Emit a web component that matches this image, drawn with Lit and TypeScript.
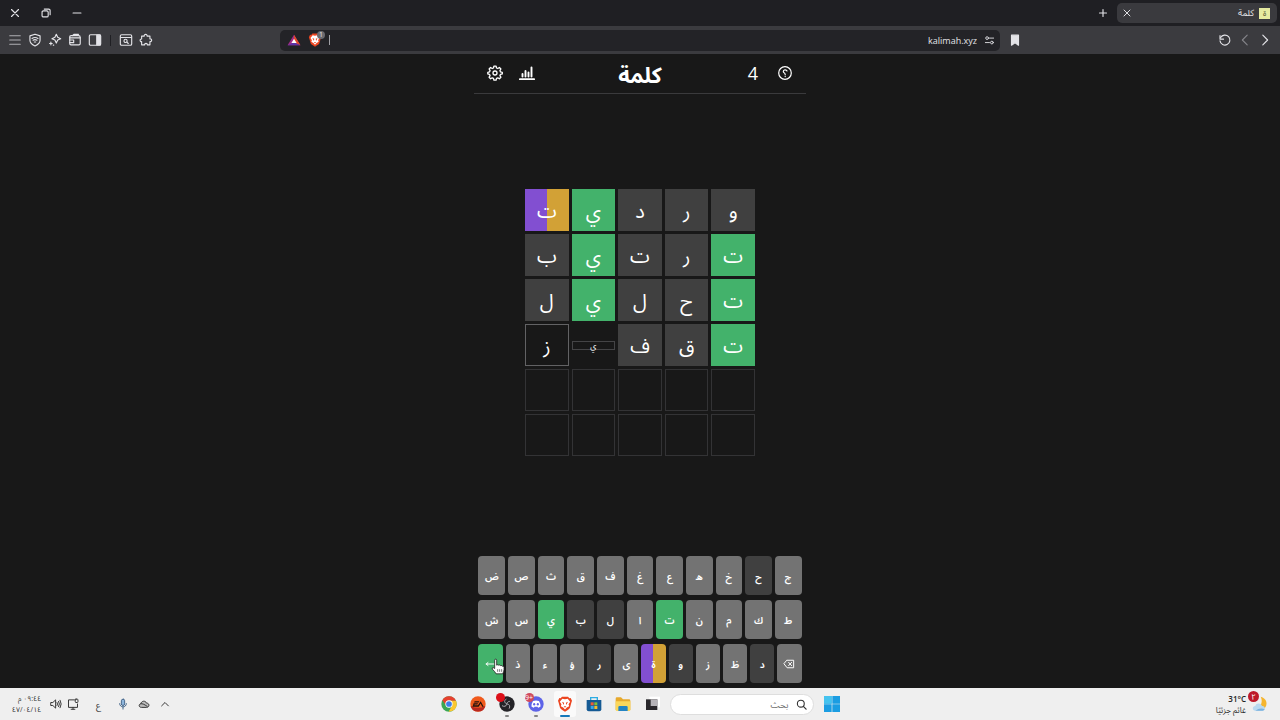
import { LitElement, html, css, svg } from "lit";
import { customElement, property } from "lit/decorators.js";
import { classMap } from "lit/directives/class-map.js";

type Cell = { letter: string; state: string };

/** Line icons, drawn on a 16-unit grid. */
const icons: Record<string, unknown> = {
  close: svg`<path d="M4 4l8 8M12 4l-8 8"/>`,
  restore: svg`<rect x="3.5" y="5.5" width="7" height="7" rx="1.5"/><path d="M6 3.5h5a1.7 1.7 0 0 1 1.7 1.7V10"/>`,
  minimize: svg`<path d="M3.5 8h9"/>`,
  plus: svg`<path d="M8 4v8M4 8h8"/>`,
  menu: svg`<path d="M2 3.2h12M2 8h12M2 12.8h12"/>`,
  shield: svg`<path d="M8 1.5l5.8 1.8v4.9c0 3-2.4 5-5.8 6.6-3.4-1.6-5.800-3.600-5.800-6.600V3.300z"/><path d="M4.600 6.200q3.400-2.200 6.800 0M5.800 8.300q2.200-1.300 4.400 0M7.200 10.300h1.600"/>`,
  sparkle: svg`<path d="M9.500 1.500l1.600 3.400 3.400 1.600-3.400 1.600-1.600 3.400-1.600-3.400-3.400-1.600 3.400-1.600z"/><path d="M3.300 10.500v3M1.800 12h3M6 13.800h.6"/>`,
  wallet: svg`<path d="M2 6V4.500Q2 3 3.500 3H12q2 0 2 2v7q0 1.500-1.500 1.500h-9Q2 13.500 2 12z"/><path d="M5 3l2-1.500h5M2 5.500h12M2 8h4.500v3H2"/>`,
  sidebar: svg`<rect x="1.500" y="2" width="13" height="12" rx="1.500"/><path d="M10 2.500h4v11h-4z" fill="currentColor"/>`,
  pageSearch: svg`<rect x="1.500" y="2" width="13" height="12" rx="1.500"/><path d="M2 5.200h12"/><circle cx="7.500" cy="9" r="1.800"/><path d="M9 10.400l1.600 1.600"/>`,
  puzzle: svg`<path d="M3 3.500h3c-.6-2.600 3.800-2.600 3.200 0h3.300v3.200c2.600-.5 2.600 3.600 0 3.100v3.700H9.500c.3-2.200-3.300-2.200-3 0H3v-3.600c-2.300.3-2.300-3.300 0-3z"/>`,
  tune: svg`<circle cx="4.500" cy="4.500" r="2"/><path d="M8 4.500h6M2 11h6"/><circle cx="11.500" cy="11" r="2"/>`,
  bookmark: svg`<path d="M4 2.500h8v11.500l-4-2.800-4 2.800z" fill="currentColor"/>`,
  reload: svg`<path d="M3 5.200A5.700 5.700 0 1 1 2.300 9"/><path d="M2.300 3v4h4" />`,
  back: svg`<path d="M10.500 2.500L5 8l5.500 5.500"/>`,
  forward: svg`<path d="M5.500 2.500L11 8l-5.500 5.500"/>`,
  gear: svg`<circle cx="8" cy="8" r="2"/><path d="M6.900 1.200h2.200l.4 1.800 1.300.5 1.600-1 1.500 1.500-1 1.600.6 1.300 1.800.4v1.600l-1.800.4-.6 1.400 1 1.500-1.500 1.600-1.600-1-1.300.5-.4 1.800H6.900l-.4-1.800-1.300-.5-1.600 1-1.500-1.600 1-1.500-.6-1.400-1.700-.4V7.300l1.700-.4.600-1.300-1-1.600 1.500-1.500 1.600 1 1.300-.5z"/>`,
  stats: svg`<path d="M.8 14.200h14.400" stroke-width="1.700"/><path d="M3.500 11.500V9M6.500 11.500V6M9.500 11.500V7.500M12.500 11.500V2.500" stroke-width="1.900"/>`,
  help: svg`<circle cx="8" cy="8" r="6.300" stroke-width="1.200"/><path d="M10 6C9.400 4.300 6.300 4.400 6.300 6.400c0 1.500 1.900 1.500 1.900 3.100M8.200 11.200v.4" stroke-width="1.200"/>`,
  backspace: svg`<path d="M5.500 3h8.700v10H5.500L1.500 8z"/><path d="M7.500 5.800l4 4.400M11.500 5.800l-4 4.400"/>`,
  enter: svg`<path d="M1.500 8h13M4 6L1.500 8 4 10"/>`,
  chevronUp: svg`<path d="M3.500 10.500L8 6l4.500 4.500"/>`,
  mic: svg`<rect x="5.800" y="1.500" width="4.400" height="8.500" rx="2.200" fill="#8db5dc"/><path d="M3.500 7.500c0 6 9 6 9 0M8 12v2.800"/>`,
  cloud: svg`<path d="M4.200 12.500C.5 12.500.8 8 3.800 7.700 4.500 3.600 10 3 11.300 6.800c4.200-.2 4.500 5.700.7 5.700z" fill="#bcbcbc"/><path d="M3.800 7.700c2-.4 4 .3 8.500 3.500"/>`,
  display: svg`<path d="M10 2.500H2v10h12V8M5.500 15h5M8 12.500V15"/><rect x="11" y="1.500" width="3.600" height="4.500" rx="1"/>`,
  volume: svg`<path d="M1.500 6h2.300L7.500 2.500v11L3.800 10H1.500z"/><path d="M9.500 6q1.200 2 0 4M11.500 4.500q2.200 3.500 0 7M13.500 3q3 5 0 10"/>`,
  search: svg`<circle cx="7" cy="6.800" r="5" stroke-width="1.600"/><path d="M10.700 10.700l4 4" stroke-width="1.800"/>`,
};

/** Filled, coloured marks, drawn on a 24-unit grid. */
const marks: Record<string, unknown> = {
  windows: svg`<path d="M0 0h11.500v11.500H0zM12.500 0H24v11.500H12.500zM0 12.500h11.500V24H0zM12.500 12.500H24V24H12.500z" fill="#1b9de2"/><path d="M0 0h11.500v11.500H0z" fill="#45c3ef"/>`,
  taskview: svg`<rect x="8" y="1" width="16" height="16" fill="#fff"/><path d="M3 5h17v16H3z" fill="#29272b"/><path d="M10 5h10v10H10z" fill="#b6b3b8"/>`,
  explorer: svg`<path d="M1 4q0-2 2-2h6l3 3h9q2 0 2 2v14H1z" fill="#e7a92c"/><path d="M1 8h22v13q0 1.500-2 1.500H3q-2 0-2-2z" fill="#fbd75b"/><path d="M5 22.500v-6q0-1.500 2-1.500h10q2 0 2 1.500v6z" fill="#2384c4"/>`,
  store: svg`<path d="M7 7V2.500h10V7" fill="none" stroke="#2cace3" stroke-width="2"/><path d="M1 6h22v14q0 3-3 3H4q-3 0-3-3z" fill="#155a94"/><path d="M7 9.500h4.500V14H7z" fill="#ef5b35"/><path d="M12.500 9.500H17V14h-4.500z" fill="#84bd35"/><path d="M7 15h4.500v4.500H7z" fill="#35a8e8"/><path d="M12.500 15H17v4.500h-4.500z" fill="#f6bd2c"/>`,
  brave: svg`<path d="M7.500 1h9l2 2.300 2-.2 2 4-1 3-2 7.500q-.8 2-7.500 5.900-6.700-3.900-7.500-5.900l-2-7.500-1-3 2-4 2 .2z" fill="#ec4520"/><path d="M12 4.800l4-.8 3.800 4.500-2.500 4 1 2.700-3.600 2-2.700 3-2.700-3-3.600-2 1-2.700-2.500-4L8 4z" fill="#fff"/><path d="M7.500 8.500l3.200 1.500-.6 3.500zM16.500 8.500l-3.200 1.500.6 3.500zM10 15.500h4l-2 2z" fill="#ec4520"/>`,
  discord: svg`<circle cx="12" cy="12" r="11.500" fill="#5d63e8"/><path d="M7.500 7.500q4.500-1.500 9 0 2.700 4.500 2.300 8.300-1.800 1.500-3.700 1.700l-.8-1.500q-2.300.6-4.600 0l-.8 1.500q-1.900-.2-3.700-1.700Q4.800 12 7.500 7.500z" fill="#fff"/><ellipse cx="9.300" cy="12.500" rx="1.600" ry="1.900" fill="#5d63e8"/><ellipse cx="14.700" cy="12.500" rx="1.600" ry="1.900" fill="#5d63e8"/>`,
  obs: svg`<circle cx="12" cy="12" r="11.500" fill="#242327"/><path d="M11 4.500c-3.500 2-3.500 6 .8 7 .5-2 2-3.500 4.500-3.500M12 12c-1 3.500-4.500 4.500-7.500 2.500M12 11.800c4 .5 5 4 3.200 7.200" fill="none" stroke="#a9a7ac" stroke-width="1.500"/>`,
  ea: svg`<circle cx="12" cy="12" r="11.500" fill="#f05a1c"/><path d="M.8 14.500a11.500 11.500 0 0 0 22.400 0Q12 21 .8 14.500z" fill="#b92820"/><path d="M7 8h7l-1 1.800H6zM5.500 11h6.500l-1 1.700H7l-.8 1.300H12l4-6 4.500 8h-2.200l-2.300-4.600L13 16H3.500l1.800-3.300H4.500z" fill="#22100d"/>`,
  chrome: svg`<circle cx="12" cy="12" r="11.500" fill="#3aa653"/><path d="M2 6.300A11.500 11.500 0 0 1 22.500 7H12a5 5 0 0 0-4.700 7z" fill="#e6402f"/><path d="M22.500 7A11.500 11.500 0 0 1 11.500 23.500L17 13.500Q17.500 9.500 14 7z" fill="#fcc72f"/><circle cx="12" cy="12" r="5.500" fill="#fff"/><circle cx="12" cy="12" r="4.300" fill="#3d7de8"/>`,
  rewards: svg`<path d="M12 3l11 18H1z" fill="#a02c86"/><path d="M12 3l11 18-11-4z" fill="#e24928"/><path d="M1 21h22l-11-5z" fill="#5d32a8"/><path d="M12 10l4.500 7h-9z" fill="#fff"/>`,
  weather: svg`<path d="M13 1c9 2 12 12 5 18L8 18C15 14 16 7 13 1z" fill="#f5b52e"/><path d="M5 22c-5 0-5-7 0-7 1-5 9-5 10 0 5-1 6 7 1 7z" fill="#b9d9f0"/><path d="M5 22q7-5 14-2-1 2-3 2z" fill="#7bb2df"/>`,
  hand: svg`<path d="M7 2.500q0-1.500 1.500-1.500T10 2.500V10q2-1.500 3 0 2-1 3 .7 2.200-.8 2.700 1 2-.4 2.300 1.500V17q-.4 3-2 6H9q-1.500-3.500-5.500-7-1-2.400 1.200-2.400L7 15z" fill="#fff" stroke="#222" stroke-width="1.200"/><path d="M11.500 16v4M14.500 16v4M17.500 16v4" stroke="#333" stroke-width="1"/>`,
};

@customElement("ui-icon")
export class UiIcon extends LitElement {
  @property() name = "";
  @property({ type: Boolean }) mark = false;

  static styles = css`
    :host {
      display: block;
      width: 14px;
      height: 14px;
    }
    svg {
      display: block;
      width: 100%;
      height: 100%;
      overflow: visible;
    }
    .line {
      fill: none;
      stroke: currentColor;
      stroke-width: 1.300;
      stroke-linecap: round;
      stroke-linejoin: round;
    }
  `;

  render() {
    return this.mark
      ? html`<svg viewBox="0 0 24 24" aria-hidden="true">${marks[this.name]}</svg>`
      : html`<svg class="line" viewBox="0 0 16 16" aria-hidden="true">${icons[this.name]}</svg>`;
  }
}

const reset = css`
  * {
    box-sizing: border-box;
  }
  button,
  input {
    margin: 0;
    padding: 0;
    border: 0;
    background: none;
    color: inherit;
    font: inherit;
    outline: none;
  }
  button {
    display: flex;
    align-items: center;
    justify-content: center;
    cursor: pointer;
  }
`;

@customElement("browser-bar")
export class BrowserBar extends LitElement {
  static styles = [
    reset,
    css`
      :host {
        display: block;
        color: #e4e4e8;
        font-size: 9px;
      }
      .tabs,
      .tools {
        display: flex;
        align-items: center;
        height: 26px;
      }
      .tabs {
        justify-content: space-between;
        padding: 0 3px 0 7px;
        background: #1f1f23;
      }
      .group {
        display: flex;
        align-items: center;
        gap: 7px;
      }
      .tab {
        display: flex;
        align-items: center;
        gap: 5px;
        width: 160px;
        height: 20px;
        padding: 0 7px 0 4px;
        border-radius: 5px;
        background: #3a3a3e;
      }
      .favicon {
        display: grid;
        place-items: center;
        width: 11px;
        height: 11px;
        background: #e5eaa0;
        color: #4b4d2c;
        font-size: 8px;
        line-height: 10px;
      }
      .tab button {
        margin-inline-start: auto;
      }
      .small {
        width: 12px;
        height: 12px;
      }
      .window {
        display: flex;
        gap: 15px;
      }
      .window button {
        width: 16px;
        height: 16px;
      }
      .tools {
        display: grid;
        grid-template-columns: 1fr minmax(0, 720px) 1fr;
        height: 28px;
        padding: 0 8px;
        background: #3b3b3f;
      }
      .nav {
        display: flex;
        align-items: center;
        gap: 6px;
      }
      .off {
        color: #85858a;
      }
      .dim {
        color: #b0b0b4;
      }
      .push {
        margin-inline-start: auto;
        margin-inline-end: 8px;
      }
      .address {
        display: flex;
        align-items: center;
        gap: 7px;
        height: 21px;
        padding: 0 5px 0 7px;
        border-radius: 5px;
        background: #232327;
      }
      .address input {
        flex: 1;
        min-width: 0;
        direction: ltr;
        text-align: right;
        margin-inline-start: 2px;
      }
      .tune {
        width: 11px;
        height: 11px;
      }
      .caret {
        width: 1px;
        height: 10px;
        background: #a0a0a5;
      }
      .lion {
        position: relative;
      }
      .count {
        position: absolute;
        top: -2px;
        right: -3px;
        width: 8px;
        height: 8px;
        border-radius: 4px;
        background: #6b6b70;
        font-size: 7px;
        line-height: 8px;
        text-align: center;
      }
      .extras {
        display: flex;
        align-items: center;
        justify-content: flex-end;
        gap: 6px;
      }
      .rule {
        width: 1px;
        height: 11px;
        margin: 0 2px;
        background: #1f1f23;
      }
    `,
  ];

  private tool(name: string, label: string, cls = "") {
    return html`<button class=${cls} aria-label=${label}><ui-icon name=${name}></ui-icon></button>`;
  }

  render() {
    return html`
      <div class="tabs">
        <div class="group">
          <div class="tab">
            <span class="favicon">ة</span><span>كلمة</span>
            <button aria-label="إغلاق علامة التبويب"><ui-icon class="small" name="close"></ui-icon></button>
          </div>
          ${this.tool("plus", "علامة تبويب جديدة")}
        </div>
        <div class="window">
          ${this.tool("minimize", "تصغير")} ${this.tool("restore", "استعادة")} ${this.tool("close", "إغلاق")}
        </div>
      </div>
      <div class="tools">
        <div class="nav">
          ${this.tool("forward", "رجوع")} ${this.tool("back", "تقدم", "off")} ${this.tool("reload", "إعادة تحميل")}
          ${this.tool("bookmark", "إشارة مرجعية", "push")}
        </div>
        <div class="address">
          <ui-icon class="tune" name="tune"></ui-icon>
          <input type="text" aria-label="العنوان" value="kalimah.xyz" />
          <span class="caret"></span>
          <span class="lion"><ui-icon mark name="brave"></ui-icon><span class="count">1</span></span>
          <ui-icon mark name="rewards"></ui-icon>
        </div>
        <div class="extras">
          ${this.tool("puzzle", "الإضافات")} ${this.tool("pageSearch", "بحث في الصفحة")}
          <span class="rule"></span>
          ${this.tool("sidebar", "الشريط الجانبي")} ${this.tool("wallet", "المحفظة")}
          ${this.tool("sparkle", "المساعد")} ${this.tool("shield", "الحماية")} ${this.tool("menu", "القائمة", "dim")}
        </div>
      </div>
    `;
  }
}

const word = (letters: string, states: string): Cell[] => {
  const names: Record<string, string> = { a: "absent", c: "correct", s: "split", t: "typed", f: "flipping", e: "empty", k: "idle" };
  return [...states].map((s, i) => ({ letter: letters[i] ?? "", state: names[s] }));
};

@customElement("word-game")
export class WordGame extends LitElement {
  private board = [
    word("ورديت", "aaacs"),
    word("ترتيب", "caaca"),
    word("تحليل", "caaca"),
    word("تقفيز", "caaft"),
    word("", "eeeee"),
    word("", "eeeee"),
  ];

  private keys = [
    word("جحخهعغفقثصض", "kakkkkkkkkk"),
    word("طكمنتالبيسش", "kkkkckaackk"),
    word("دظزوةىرؤءذ", "akkaskakkk"),
  ];

  static styles = [
    reset,
    css`
      :host {
        display: flex;
        flex-direction: column;
        align-items: center;
        min-height: 0;
        background: #181818;
        color: #fff;
      }
      header {
        display: grid;
        grid-template-columns: 1fr auto 1fr;
        align-items: center;
        width: 100%;
        max-width: 332px;
        height: 40px;
        padding: 0 12px 2px;
        border-bottom: 1px solid #3a3a3c;
      }
      h1 {
        margin: 0;
        padding-top: 3px;
        font-size: 22px;
        line-height: 34px;
        font-weight: 700;
      }
      .side {
        display: flex;
        align-items: center;
        gap: 14px;
      }
      .end {
        justify-content: flex-end;
      }
      .side button,
      .side output {
        width: 18px;
      }
      .side output {
        font-size: 18px;
        text-align: center;
      }
      .side ui-icon {
        width: 16px;
        height: 16px;
      }
      main {
        flex: 1;
        display: flex;
        align-items: center;
      }
      .board {
        display: grid;
        grid-template-columns: repeat(5, 1fr);
        grid-auto-rows: 42px;
        gap: 3px;
        width: 230px;
      }
      .tile {
        display: grid;
        place-items: center;
        padding-top: 2px;
        font-size: 20px;
        line-height: 30px;
      }
      .empty {
        border: 1px solid #333335;
      }
      .typed {
        border: 1px solid #626264;
      }
      .flipping {
        align-self: center;
        height: 9px;
        padding: 0;
        border: 1px solid #444446;
        font-size: 8px;
        line-height: 5px;
      }
      .absent {
        background: #404040;
      }
      .correct {
        background: #43b26b;
      }
      .idle {
        background: #737373;
      }
      .split {
        background: linear-gradient(90deg, #824fd1 50%, #d2a136 50%);
      }
      .keyboard {
        display: grid;
        gap: 5px;
        width: 100%;
        max-width: 333px;
        padding: 5px;
      }
      .row {
        display: flex;
        gap: 3px;
      }
      .row button {
        flex: 1 1 0;
        min-width: 0;
        height: 39px;
        padding-top: 1px;
        border-radius: 4px;
        font-size: 10px;
        font-weight: 600;
      }
      .row ui-icon {
        width: 12px;
        height: 12px;
      }
      .send {
        position: relative;
      }
      .row .pointer {
        position: absolute;
        left: 12px;
        top: 14px;
        width: 16px;
        height: 17px;
      }
    `,
  ];

  render() {
    return html`
      <header>
        <div class="side">
          <button aria-label="مساعدة"><ui-icon name="help"></ui-icon></button>
          <output>4</output>
        </div>
        <h1>كلمة</h1>
        <div class="side end">
          <button aria-label="إحصائيات"><ui-icon name="stats"></ui-icon></button>
          <button aria-label="إعدادات"><ui-icon name="gear"></ui-icon></button>
        </div>
      </header>
      <main>
        <div class="board">
          ${this.board.flat().map((c) => html`<div class=${classMap({ tile: true, [c.state]: true })}>${c.letter}</div>`)}
        </div>
      </main>
      <div class="keyboard">
        ${this.keys.map(
          (row, i) => html`<div class="row">
            ${i === 2 ? html`<button class="idle" aria-label="حذف"><ui-icon name="backspace"></ui-icon></button>` : ""}
            ${row.map((k) => html`<button class=${k.state}>${k.letter}</button>`)}
            ${i === 2
              ? html`<button class="correct send" aria-label="إدخال">
                  <ui-icon name="enter"></ui-icon><ui-icon class="pointer" mark name="hand"></ui-icon>
                </button>`
              : ""}
          </div>`
        )}
      </div>
    `;
  }
}

@customElement("task-bar")
export class TaskBar extends LitElement {
  static styles = [
    reset,
    css`
      :host {
        display: grid;
        grid-template-columns: 1fr auto 1fr;
        align-items: center;
        height: 32px;
        padding: 0 12px;
        background: #efefef;
        color: #333;
        font-size: 8px;
        line-height: 11px;
      }
      .weather,
      .center,
      .tray {
        display: flex;
        align-items: center;
      }
      .weather {
        gap: 6px;
      }
      .weather-icon,
      .app {
        position: relative;
      }
      .weather-icon ui-icon {
        width: 16px;
        height: 16px;
      }
      .alert {
        position: absolute;
        top: -5px;
        left: -4px;
        width: 11px;
        height: 11px;
        border-radius: 6px;
        background: #bd1a2b;
        color: #fff;
        font-size: 8px;
        line-height: 11px;
        text-align: center;
      }
      .weather small,
      .weather strong {
        display: block;
        font-size: 8px;
        font-weight: 400;
      }
      .weather strong {
        direction: ltr;
        text-align: right;
        color: #222;
        font-weight: 600;
      }
      .center {
        gap: 7px;
      }
      .search {
        display: flex;
        align-items: center;
        gap: 7px;
        width: 144px;
        height: 21px;
        padding: 0 6px;
        border: 1px solid #dedede;
        border-radius: 11px;
        background: #fff;
      }
      .search input {
        flex: 1;
        min-width: 0;
        font-size: 9px;
      }
      .search input::placeholder {
        color: #707070;
        opacity: 1;
      }
      .search ui-icon {
        width: 11px;
        height: 11px;
      }
      .app {
        width: 22px;
        height: 26px;
        border-radius: 3px;
      }
      .app ui-icon {
        width: 16px;
        height: 16px;
      }
      .active {
        background: #fafafa;
      }
      .running::after {
        content: "";
        position: absolute;
        bottom: 0;
        left: 9px;
        width: 4px;
        height: 2px;
        border-radius: 1px;
        background: #858585;
      }
      .active::after {
        content: "";
        position: absolute;
        bottom: 0;
        left: 6px;
        width: 10px;
        height: 2px;
        border-radius: 1px;
        background: #1677b8;
      }
      .badge {
        position: absolute;
        top: 2px;
        left: 0;
        min-width: 9px;
        height: 9px;
        border-radius: 5px;
        background: #dc0f18;
        color: #fff;
        direction: ltr;
        font-size: 7px;
        line-height: 9px;
      }
      .muted {
        background: #d0495c;
      }
      .tray {
        justify-content: flex-end;
        gap: 9px;
      }
      .tray ui-icon {
        width: 12px;
        height: 12px;
      }
      .tray .mic {
        color: #43658a;
      }
      .sound {
        display: flex;
        gap: 5px;
      }
      .lang {
        width: 20px;
        font-size: 9px;
        text-align: center;
      }
      .clock {
        text-align: right;
        font-size: 7px;
      }
    `,
  ];

  private apps = [
    { name: "taskview", label: "عرض المهام" },
    { name: "explorer", label: "مستكشف الملفات" },
    { name: "store", label: "المتجر" },
    { name: "brave", label: "Brave", active: true },
    { name: "discord", label: "Discord", running: true, badge: "9+" },
    { name: "obs", label: "OBS", running: true, badge: " " },
    { name: "ea", label: "EA" },
    { name: "chrome", label: "Chrome" },
  ];

  render() {
    return html`
      <div class="weather">
        <span class="weather-icon"><ui-icon mark name="weather"></ui-icon><span class="alert">٢</span></span>
        <div><strong>31°C</strong><small>غائم جزئيًا</small></div>
      </div>
      <div class="center">
        <button class="app" aria-label="ابدأ"><ui-icon mark name="windows"></ui-icon></button>
        <label class="search">
          <ui-icon name="search"></ui-icon>
          <input type="search" placeholder="بحث" aria-label="بحث" />
        </label>
        ${this.apps.map(
          (a) => html`<button class=${classMap({ app: true, active: !!a.active, running: !!a.running })} aria-label=${a.label}>
            <ui-icon mark name=${a.name}></ui-icon>${a.badge
              ? html`<span class=${classMap({ badge: true, muted: a.name === "discord" })}>${a.badge}</span>`
              : ""}
          </button>`
        )}
      </div>
      <div class="tray">
        <ui-icon name="chevronUp"></ui-icon>
        <ui-icon name="cloud"></ui-icon>
        <ui-icon class="mic" name="mic"></ui-icon>
        <span class="lang">ع</span>
        <span class="sound"><ui-icon name="display"></ui-icon><ui-icon name="volume"></ui-icon></span>
        <div class="clock"><div>٠٩:٤٤ م</div><div>٤٧/٠٤/١٤</div></div>
      </div>
    `;
  }
}

@customElement("app-root")
export class AppRoot extends LitElement {
  static styles = css`
    :host {
      display: grid;
      grid-template-rows: auto 1fr auto;
      height: 100vh;
      overflow: hidden;
      direction: rtl;
      background: #181818;
      font-family: "Open Sans", "Noto Sans", "Noto Sans Arabic", "DejaVu Sans", sans-serif;
    }
  `;

  render() {
    return html`<browser-bar></browser-bar><word-game></word-game><task-bar></task-bar>`;
  }
}
